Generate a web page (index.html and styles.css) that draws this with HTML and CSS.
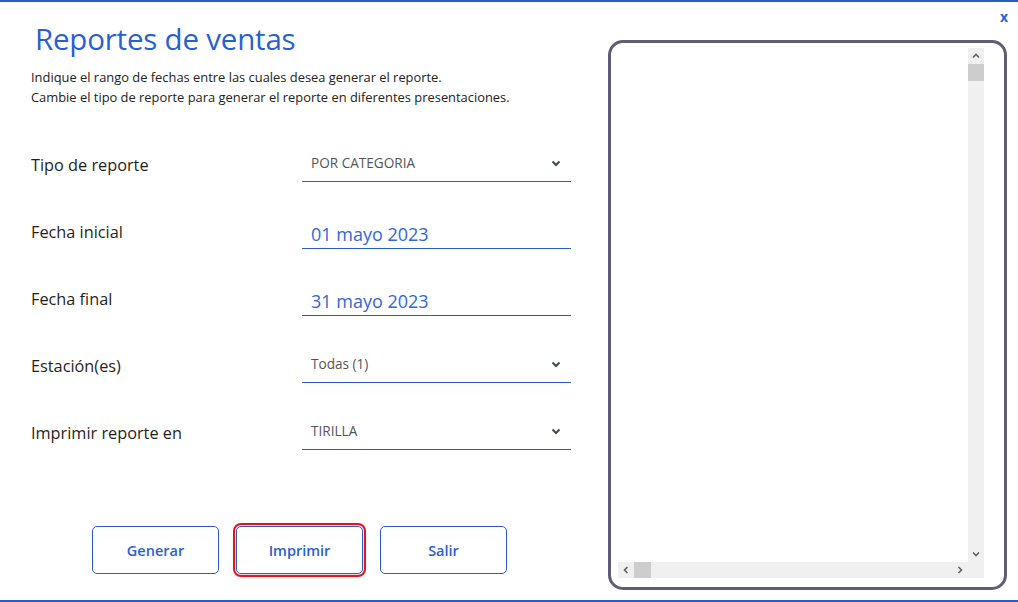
FILE: index.html
```html
<!DOCTYPE html>
<html lang="es">
<head>
<meta charset="utf-8">
<title>Reportes de ventas</title>
<link rel="stylesheet" href="styles.css">
</head>
<body>
<div class="window">
  <button class="close">x</button>
  <div class="main">
    <section class="left">
      <h1 class="title">Reportes de ventas</h1>
      <p class="desc">Indique el rango de fechas entre las cuales desea generar el reporte.<br>Cambie el tipo de reporte para generar el reporte en diferentes presentaciones.</p>
      <div class="form">
        <div class="row">
          <span class="label">Tipo de reporte</span>
          <div class="field select"><span class="value">POR CATEGORIA</span><svg class="chev" width="10" height="7" viewBox="0 0 10 7"><path d="M1.5 1.5 L5 5 L8.5 1.5" fill="none" stroke="#3f4756" stroke-width="2"/></svg></div>
        </div>
        <div class="row">
          <span class="label">Fecha inicial</span>
          <div class="field date"><span class="value">01 mayo 2023</span></div>
        </div>
        <div class="row">
          <span class="label">Fecha final</span>
          <div class="field date"><span class="value">31 mayo 2023</span></div>
        </div>
        <div class="row">
          <span class="label">Estación(es)</span>
          <div class="field select"><span class="value">Todas (1)</span><svg class="chev" width="10" height="7" viewBox="0 0 10 7"><path d="M1.5 1.5 L5 5 L8.5 1.5" fill="none" stroke="#3f4756" stroke-width="2"/></svg></div>
        </div>
        <div class="row">
          <span class="label">Imprimir reporte en</span>
          <div class="field select"><span class="value">TIRILLA</span><svg class="chev" width="10" height="7" viewBox="0 0 10 7"><path d="M1.5 1.5 L5 5 L8.5 1.5" fill="none" stroke="#3f4756" stroke-width="2"/></svg></div>
        </div>
      </div>
      <div class="buttons">
        <button class="btn">Generar</button>
        <button class="btn focused">Imprimir</button>
        <button class="btn">Salir</button>
      </div>
    </section>
    <section class="preview">
      <div class="viewer">
        <div class="vrow">
          <div class="content"></div>
          <div class="vbar">
            <svg class="arrow" width="16" height="16" viewBox="0 0 16 16"><path d="M5 9.5 L8 6.5 L11 9.5" fill="none" stroke="#606060" stroke-width="1.6"/></svg>
            <div class="vthumb"></div>
            <div class="spacer"></div>
            <svg class="arrow" width="16" height="16" viewBox="0 0 16 16"><path d="M5 6.5 L8 9.5 L11 6.5" fill="none" stroke="#606060" stroke-width="1.6"/></svg>
          </div>
        </div>
        <div class="hbar">
          <svg class="arrow" width="16" height="16" viewBox="0 0 16 16"><path d="M9.5 5 L6.5 8 L9.5 11" fill="none" stroke="#606060" stroke-width="1.6"/></svg>
          <div class="hthumb"></div>
          <div class="spacer"></div>
          <svg class="arrow" width="16" height="16" viewBox="0 0 16 16"><path d="M6.5 5 L9.5 8 L6.5 11" fill="none" stroke="#606060" stroke-width="1.6"/></svg>
          <div class="corner"></div>
        </div>
      </div>
    </section>
  </div>
</div>
</body>
</html>
```

FILE: styles.css
```css
* { box-sizing: border-box; }
html, body {
  margin: 0;
  padding: 0;
  background: #ffffff;
}
body {
  font-family: "Open Sans", "Noto Sans", "Liberation Sans", sans-serif;
  color: #1f1f1f;
}
.window {
  position: relative;
  width: 1018px;
  height: 602px;
  border-top: 2px solid #2a5cc4;
  border-bottom: 2px solid #2a5cc4;
  background: #fff;
}
.close {
  position: absolute;
  top: 7px;
  right: 10px;
  border: 0;
  background: transparent;
  padding: 0;
  font-family: "Open Sans", sans-serif;
  font-weight: 700;
  font-size: 14px;
  color: #2a62d8;
  line-height: 16px;
}
.main {
  display: flex;
  height: 598px;
}
.left {
  width: 608px;
  padding-left: 31px;
  display: flex;
  flex-direction: column;
}
.title {
  margin: 17px 0 0 4px;
  font-weight: 400;
  font-size: 29.5px;
  line-height: 40px;
  color: #2a5fcf;
  letter-spacing: -0.2px;
}
.desc {
  margin: 8px 0 0 0;
  font-size: 12.9px;
  line-height: 20px;
  color: #222;
}
.form {
  margin-top: 8px;
  display: flex;
  flex-direction: column;
}
.row {
  height: 67px;
  display: flex;
  align-items: flex-end;
}
.label {
  width: 271px;
  font-size: 16.3px;
  line-height: 22px;
  padding-bottom: 6px;
  color: #1f1f1f;
}
.field {
  width: 269px;
  height: 36px;
  border-bottom: 1.5px solid #2a5cc4;
  display: flex;
  align-items: center;
  padding-left: 9px;
  padding-right: 10px;
}
.select .value {
  flex: 1;
  font-size: 13.6px;
  color: #555;
  padding-bottom: 2px;
}
.chev { display: block; margin-bottom: 1px; }
.date { align-items: flex-end; }
.date .value {
  font-size: 18px;
  line-height: 26px;
  color: #3466d6;
  padding-bottom: 1px;
}
.buttons {
  margin-top: 76px;
  padding-left: 61px;
  display: flex;
  gap: 17px;
}
.btn {
  width: 127px;
  height: 48px;
  border: 1px solid #2a5cc4;
  border-radius: 5px;
  background: #fff;
  font-family: "Open Sans", sans-serif;
  font-weight: 600;
  font-size: 14.5px;
  color: #2a5fcf;
  padding: 0;
}
.btn.focused {
  outline: 2px solid #e5141b;
  outline-offset: 1.5px;
  box-shadow: 0 1px 6px rgba(0, 0, 0, 0.22);
}
.preview {
  width: 399px;
  margin-top: 38px;
  height: 550px;
  border: 3px solid #5e5d74;
  border-radius: 15px;
  padding: 5px 20px 9px 7px;
}
.viewer {
  height: 100%;
  display: flex;
  flex-direction: column;
}
.vrow {
  flex: 1;
  display: flex;
}
.content { flex: 1; background: #fff; }
.vbar {
  width: 16px;
  background: #f0f0f0;
  display: flex;
  flex-direction: column;
}
.arrow { display: block; flex: none; }
.vthumb {
  height: 17px;
  background: #cdcdcd;
}
.spacer { flex: 1; }
.hbar {
  height: 16px;
  background: #f0f0f0;
  display: flex;
}
.hthumb {
  width: 17px;
  background: #cdcdcd;
}
.corner {
  width: 16px;
  background: #f0f0f0;
}
```
